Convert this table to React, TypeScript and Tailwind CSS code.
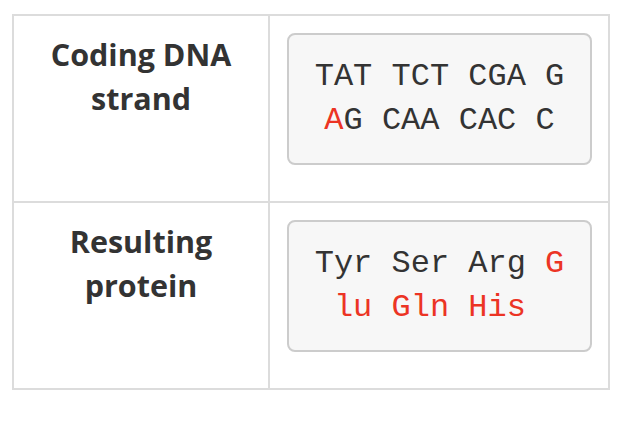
type Row = {
    label: string[],
    lines: { text: string, red?: boolean }[][]
}

const rows: Row[] = [
    {
        label: ['Coding DNA', 'strand'],
        lines: [
            [{ text: 'TAT TCT CGA G' }],
            [{ text: 'A', red: true }, { text: 'G CAA CAC C' }],
        ],
    },
    {
        label: ['Resulting', 'protein'],
        lines: [
            [{ text: 'Tyr Ser Arg ' }, { text: 'G', red: true }],
            [{ text: 'lu Gln His ', red: true }],
        ],
    },
]

export default function App() {
    return <div className="w-[634px] h-[432px] bg-white pt-[14px] pl-3">
        <div className="w-[598px] border-2 border-[#dcdcdc]">
            {rows.map((row, i) => (
                <div
                    key={i}
                    className={`flex ${i === 0 ? 'border-b-2 border-[#dcdcdc]' : ''}`}
                >
                    <div className="w-[256px] shrink-0 border-r-2 border-[#dcdcdc] pt-[16px] px-3 text-center font-['Open_Sans',sans-serif] font-bold text-[30.5px] leading-[44px] text-[#333]">
                        {row.label.map((l) => <div key={l}>{l}</div>)}
                    </div>
                    <div className="flex-1 pt-[17px] pb-4 pl-[17px] pr-4">
                        <div className="mb-5 rounded-lg border-2 border-[#cccccc] bg-[#f7f7f7] py-5 text-center font-['Liberation_Mono','Courier_New',monospace] text-[32px] leading-[44px] text-[#333]">
                            {row.lines.map((line, j) => (
                                <div key={j} className="whitespace-pre">
                                    {line.map((part, k) => (
                                        <span key={k} className={part.red ? 'text-[#ec3424]' : ''}>{part.text}</span>
                                    ))}
                                </div>
                            ))}
                        </div>
                    </div>
                </div>
            ))}
        </div>
    </div>
}
